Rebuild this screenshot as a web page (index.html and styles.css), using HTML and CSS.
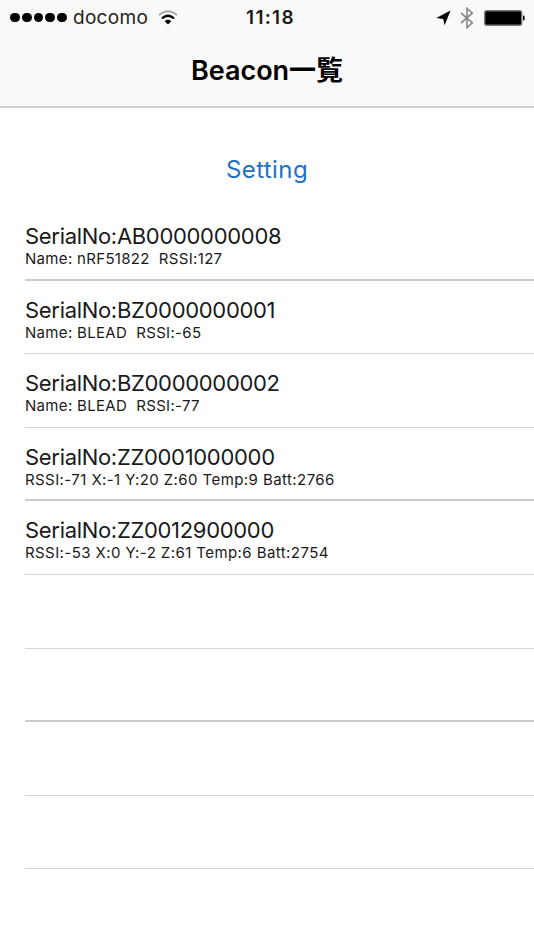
FILE: index.html
```html
<!DOCTYPE html>
<html lang="ja">
<head>
  <meta charset="UTF-8" />
  <meta name="viewport" content="width=device-width, initial-scale=1" />
  <title>Beacon一覧</title>
  <link rel="stylesheet" href="styles.css">
</head>
<body>

<header>
  <div class="status-bar">
    <div class="carrier">
      <div class="signal"><i></i><i></i><i></i><i></i><i></i></div>
      <span class="carrier-name">docomo</span>
      <svg class="wifi" width="20" height="16" viewBox="0 0 20 16">
        <path d="M1 5Q10 -2.5 19 5" fill="none" stroke="#aaa" stroke-width="2" />
        <path d="M4 8.3Q10 3.2 16 8.3" fill="none" stroke="#000" stroke-width="2.2" />
        <path d="M6.7 11.2Q10 8.4 13.3 11.2L10 14.6Z" />
      </svg>
    </div>
    <div class="time">11:18</div>
    <div class="indicators">
      <svg class="location" width="15" height="16" viewBox="0 0 15 16">
        <path d="M14.6 .6L8.6 15.3L7.2 9L.2 7.9Z" />
      </svg>
      <svg class="bluetooth" width="14" height="22" viewBox="0 0 14 22">
        <path d="M1 6L12.3 15.8L7 20.6V1.4L12.3 6.2L1 16" fill="none" stroke="#8c8c8c" stroke-width="1.7" />
      </svg>
      <svg class="battery" width="41" height="16" viewBox="0 0 41 16">
        <rect x=".7" y=".7" width="37" height="14.6" rx="2" fill="#000" stroke="#777" stroke-width="1.4" />
        <path d="M39 5.3Q40.8 5.5 40.8 8T39 10.7Z" />
      </svg>
    </div>
  </div>
  <h1>Beacon一覧</h1>
</header>

<main>
  <a class="setting">Setting</a>

  <ul class="beacon-list">
    <li>
      <div class="serial">SerialNo:AB0000000008</div>
      <div class="detail">Name: nRF51822&nbsp; RSSI:127</div>
    </li>
    <li>
      <div class="serial">SerialNo:BZ0000000001</div>
      <div class="detail">Name: BLEAD&nbsp; RSSI:-65</div>
    </li>
    <li>
      <div class="serial">SerialNo:BZ0000000002</div>
      <div class="detail">Name: BLEAD&nbsp; RSSI:-77</div>
    </li>
    <li>
      <div class="serial">SerialNo:ZZ0001000000</div>
      <div class="detail sensor">RSSI:-71 X:-1 Y:20 Z:60 Temp:9 Batt:2766</div>
    </li>
    <li>
      <div class="serial">SerialNo:ZZ0012900000</div>
      <div class="detail sensor">RSSI:-53 X:0 Y:-2 Z:61 Temp:6 Batt:2754</div>
    </li>
    <li></li>
    <li></li>
    <li></li>
    <li></li>
  </ul>
</main>

</body>
</html>
```
FILE: styles.css
```css
body {
  margin: 0;
  height: 950px;
  overflow: hidden;
  background-color: #fff;
  color: #1a1a1a;
  font-family: Inter, "Noto Sans CJK JP", sans-serif;
  font-feature-settings: "calt" 0;
}
header {
  height: 108px;
  box-sizing: border-box;
  background-color: #f9f9f9;
  border-bottom: 2px solid #d0d0d0;
}
.status-bar {
  display: grid;
  grid-template-columns: 1fr auto 1fr;
  align-items: center;
  height: 35px;
  padding: 0 9px 0 10px;
}
.carrier {
  display: flex;
  align-items: center;
}
.signal {
  display: flex;
  gap: 2px;
}
.signal i {
  width: 9.8px;
  height: 9.8px;
  border-radius: 50%;
  background-color: #000;
}
.carrier-name {
  margin-left: 6px;
  font-size: 19px;
  letter-spacing: 0.3px;
  color: #222;
}
.wifi {
  margin-left: 10px;
}
.time {
  padding-left: 6px;
  font-size: 19px;
  font-weight: 600;
  letter-spacing: 1.3px;
}
.indicators {
  display: flex;
  justify-content: flex-end;
  align-items: center;
}
.location {
  margin-right: 9px;
}
.bluetooth {
  margin-right: 10px;
}
h1 {
  margin: 0;
  line-height: 72px;
  font-size: 27px;
  font-weight: 600;
  text-align: center;
  color: #000;
}
.setting {
  display: block;
  padding-top: 47px;
  height: 52px;
  line-height: 30px;
  font-size: 24px;
  letter-spacing: 0.4px;
  text-align: center;
  color: #2272c3;
}
.beacon-list {
  margin: 0;
  padding: 0 0 0 25px;
  list-style: none;
}
.beacon-list li {
  height: 73.6px;
  padding-top: 17px;
  box-sizing: border-box;
  border-bottom: 1px solid #d6d6d8;
}
.beacon-list li:nth-child(3n+1) {
  border-bottom: 2px solid #cbcbce;
}
.serial {
  line-height: 24px;
  font-size: 22px;
  letter-spacing: -0.31px;
  white-space: nowrap;
}
.detail {
  line-height: 21px;
  font-size: 15px;
  letter-spacing: 0.32px;
  white-space: nowrap;
}
.detail.sensor {
  letter-spacing: 0.42px;
}
```
